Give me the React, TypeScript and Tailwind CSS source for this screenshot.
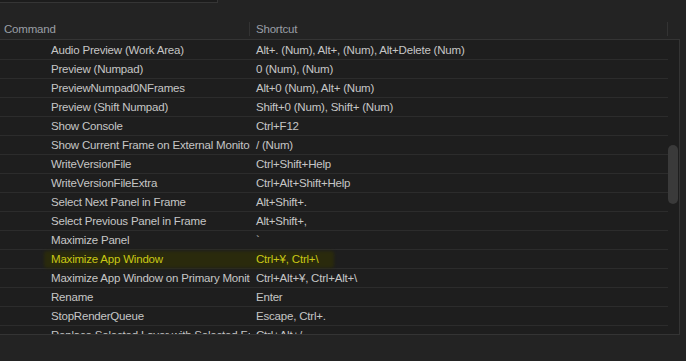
const ROWS: [string, string][] = [
  ["Audio Preview (Work Area)", "Alt+. (Num), Alt+, (Num), Alt+Delete (Num)"],
  ["Preview (Numpad)", "0 (Num),  (Num)"],
  ["PreviewNumpad0NFrames", "Alt+0 (Num), Alt+ (Num)"],
  ["Preview (Shift Numpad)", "Shift+0 (Num), Shift+ (Num)"],
  ["Show Console", "Ctrl+F12"],
  ["Show Current Frame on External Monitor", "/ (Num)"],
  ["WriteVersionFile", "Ctrl+Shift+Help"],
  ["WriteVersionFileExtra", "Ctrl+Alt+Shift+Help"],
  ["Select Next Panel in Frame", "Alt+Shift+."],
  ["Select Previous Panel in Frame", "Alt+Shift+,"],
  ["Maximize Panel", "`"],
  ["Maximize App Window", "Ctrl+¥, Ctrl+\\"],
  ["Maximize App Window on Primary Monitor", "Ctrl+Alt+¥, Ctrl+Alt+\\"],
  ["Rename", "Enter"],
  ["StopRenderQueue", "Escape, Ctrl+."],
  ["Replace Selected Layer with Selected Footage", "Ctrl+Alt+/"],
];

const HIGHLIGHTED = "Maximize App Window";

function ShortcutRow({ command, shortcut }: { command: string; shortcut: string }) {
  const marked = command === HIGHLIGHTED;
  const tone = marked ? "text-[#c9c814]" : "text-[#c6c6c6]";
  return (
    <div className="relative flex h-[19px] items-center border-b border-[#2c2c2c] pt-[2px] text-[11.5px] tracking-[-0.2px]">
      {marked && (
        <div className="absolute left-[44px] top-[1px] h-[17px] w-[290px] rounded-[3px] bg-[#2a2a0c] blur-[1.5px]" />
      )}
      <div className={`relative w-[250px] shrink-0 overflow-hidden whitespace-nowrap pl-[51px] ${tone}`}>
        {command}
      </div>
      <div className={`relative min-w-0 flex-1 overflow-hidden whitespace-nowrap pl-[6px] ${tone}`}>
        {shortcut}
      </div>
    </div>
  );
}

export default function App() {
  return (
    <div
      className="h-[361px] w-[686px] overflow-hidden bg-[#232323]"
      style={{ fontFamily: '"Segoe UI", "Liberation Sans", Arial, sans-serif' }}
    >
      <div className="h-[3px] w-[218px] border-b border-r border-[#353535] bg-[#1c1c1c]" />

      <div className="flex h-[36px] w-[679px] items-end pb-[3px] text-[11.5px] leading-[14px] tracking-[-0.2px] text-[#9a9fa6]">
        <div className="w-[250px] border-r border-[#333333] pl-[4px]">Command</div>
        <div className="flex-1 border-r border-[#333333] pl-[6px]">Shortcut</div>
        <div className="w-[11px]" />
      </div>

      <div className="relative h-[296px] w-[680px] overflow-hidden border-b border-r border-t border-[#343434] bg-[#1e1e1e] pt-[1px]">
        <div className="w-[668px]">
          {ROWS.map(([command, shortcut]) => (
            <ShortcutRow key={command} command={command} shortcut={shortcut} />
          ))}
        </div>
        <div className="absolute left-[668px] top-[105px] h-[59px] w-[10px] rounded-full bg-[#3a3a3a]" />
      </div>
    </div>
  );
}
